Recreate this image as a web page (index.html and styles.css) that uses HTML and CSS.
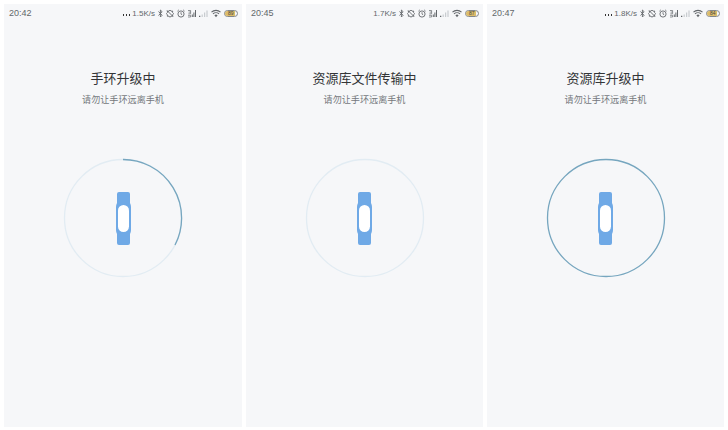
FILE: index.html
```html
<!DOCTYPE html>
<html lang="zh-CN">
<head>
    <meta charset="UTF-8">
    <title>手环升级</title>
    <link rel="stylesheet" href="styles.css">
</head>
<body>
    <svg class="defs" width="0" height="0">
        <symbol id="i-bt" viewBox="0 0 5 9"><path d="M.5 2.500l3.600 3.800L2.400 8V1l1.700 1.700L.5 6.500" fill="none" stroke="currentColor" stroke-width=".9"/></symbol>
        <symbol id="i-dnd" viewBox="0 0 8 9"><path d="M4 1l1 1.200 1.600-.2v1.600L7.700 4.700 6.600 5.800v1.500L5 7.100 4 8.300 3 7.100l-1.600.2V5.800L.3 4.700 1.400 3.600V2L3 2.200zM1 1.500l6 6" fill="none" stroke="currentColor" stroke-width=".9"/></symbol>
        <symbol id="i-alarm" viewBox="0 0 8 9"><circle cx="4" cy="5" r="3.100" fill="none" stroke="currentColor" stroke-width=".9"/><path d="M4 3.200v1.900l1.200.7M.4 2.200L1.900.8M7.600 2.200L6.100.8" fill="none" stroke="currentColor" stroke-width=".8"/></symbol>
        <symbol id="i-sig" viewBox="0 0 8 9"><path d="M0 1.500h2.600v1.600H.6M2.600 3.100v1.700H.4M0 6.300h2.600V8H0" fill="none" stroke="currentColor" stroke-width=".7"/><path d="M3.800 5.500h1V8h-1zM5.400 3.500h1V8h-1zM7 1h1v7H7z" fill="currentColor"/></symbol>
        <symbol id="i-sig2" viewBox="0 0 9 9"><path d="M0 6.800h1.300V8H0z" fill="currentColor"/><path d="M2.600 5.500h1.200V8H2.600zM5 3.500h1.200V8H5zM7.400 1.500h1.200V8H7.400z" fill="#c8ccd0"/></symbol>
        <symbol id="i-wifi" viewBox="0 0 10 9"><path d="M.5 3.200a6.500 6.500 0 0 1 9 0M2 4.900a4.300 4.300 0 0 1 6 0" fill="none" stroke="currentColor" stroke-width="1.100"/><path d="M3.400 6.300a2.300 2.300 0 0 1 3.200 0L5 8.200z" fill="currentColor"/></symbol>
        <symbol id="i-band" viewBox="0 0 15 53"><path d="M3 0h9Q14 0 14 2V11Q15 13 15 15V38Q15 40 14 42V51Q14 53 12 53H3Q1 53 1 51V42Q0 40 0 38V15Q0 13 1 11V2Q1 0 3 0z" fill="#6fa9e6"/><rect x="2" y="13" width="11" height="27" rx="5.500" fill="#fff"/></symbol>
    </svg>

    <div class="screens">
        <section class="screen">
            <div class="status-bar">
                <span class="time">20:42</span>
                <span class="status-icons">
                    <span class="dots"></span><span class="speed">1.5K/s</span>
                    <svg class="ic-bt"><use href="#i-bt"/></svg>
                    <svg class="ic"><use href="#i-dnd"/></svg>
                    <svg class="ic"><use href="#i-alarm"/></svg>
                    <svg class="ic"><use href="#i-sig"/></svg>
                    <svg class="ic-sig"><use href="#i-sig2"/></svg>
                    <svg class="ic-wifi"><use href="#i-wifi"/></svg>
                    <span class="battery"><span class="battery-level"></span><span class="battery-num">89</span></span>
                </span>
            </div>
            <h2>手环升级中</h2>
            <p class="hint">请勿让手环远离手机</p>
            <div class="ring-wrap">
                <svg class="ring" viewBox="0 0 120 120">
                    <circle class="ring-bg" cx="60" cy="60" r="58.500"/>
                    <path class="ring-fg" d="M60 1.500A58.500 58.500 0 0 1 112 87"/>
                </svg>
                <svg class="band"><use href="#i-band"/></svg>
            </div>
        </section>

        <section class="screen">
            <div class="status-bar">
                <span class="time">20:45</span>
                <span class="status-icons">
                    <span class="speed">1.7K/s</span>
                    <svg class="ic-bt"><use href="#i-bt"/></svg>
                    <svg class="ic"><use href="#i-dnd"/></svg>
                    <svg class="ic"><use href="#i-alarm"/></svg>
                    <svg class="ic"><use href="#i-sig"/></svg>
                    <svg class="ic-sig"><use href="#i-sig2"/></svg>
                    <svg class="ic-wifi"><use href="#i-wifi"/></svg>
                    <span class="battery"><span class="battery-level"></span><span class="battery-num">87</span></span>
                </span>
            </div>
            <h2>资源库文件传输中</h2>
            <p class="hint">请勿让手环远离手机</p>
            <div class="ring-wrap">
                <svg class="ring" viewBox="0 0 120 120">
                    <circle class="ring-bg" cx="60" cy="60" r="58.500"/>
                </svg>
                <svg class="band"><use href="#i-band"/></svg>
            </div>
        </section>

        <section class="screen">
            <div class="status-bar">
                <span class="time">20:47</span>
                <span class="status-icons">
                    <span class="dots"></span><span class="speed">1.8K/s</span>
                    <svg class="ic-bt"><use href="#i-bt"/></svg>
                    <svg class="ic"><use href="#i-dnd"/></svg>
                    <svg class="ic"><use href="#i-alarm"/></svg>
                    <svg class="ic"><use href="#i-sig"/></svg>
                    <svg class="ic-sig"><use href="#i-sig2"/></svg>
                    <svg class="ic-wifi"><use href="#i-wifi"/></svg>
                    <span class="battery"><span class="battery-level"></span><span class="battery-num">84</span></span>
                </span>
            </div>
            <h2>资源库升级中</h2>
            <p class="hint">请勿让手环远离手机</p>
            <div class="ring-wrap">
                <svg class="ring" viewBox="0 0 120 120">
                    <circle class="ring-fg" cx="60" cy="60" r="58.500"/>
                </svg>
                <svg class="band"><use href="#i-band"/></svg>
            </div>
        </section>
    </div>
</body>
</html>
```
FILE: styles.css
```css
* {
    margin: 0;
    padding: 0;
    box-sizing: border-box;
}

body {
    width: 728px;
    height: 430px;
    background: #fff;
    overflow: hidden;
    font-family: "Noto Sans CJK SC", "Liberation Sans", sans-serif;
}

.defs {
    display: block;
    height: 0;
}

.screens {
    display: grid;
    grid-template-columns: 238px 237px 237px;
    gap: 4px;
    padding: 4px 0 3px 4px;
    height: 430px;
}

.screen {
    background: #f6f7f9;
    display: flex;
    flex-direction: column;
    align-items: center;
}

.status-bar {
    width: 100%;
    height: 18px;
    padding: 0 4px 0 5px;
    display: flex;
    align-items: center;
    justify-content: space-between;
    font-family: "Liberation Sans", sans-serif;
    color: #63676b;
}

.time {
    font-size: 9px;
}

.status-icons {
    display: flex;
    align-items: center;
    gap: 3px;
    color: #63676b;
}

.dots {
    width: 9px;
    height: 2px;
    margin: 3px -2px 0 0;
    background: radial-gradient(circle, #333 1px, transparent 1.100px) 0 0 / 3px 2px;
}

.speed {
    font-size: 8px;
}

.ic-bt {
    width: 5px;
    height: 9px;
}

.ic {
    width: 8px;
    height: 9px;
}

.ic-sig {
    width: 9px;
    height: 9px;
}

.ic-wifi {
    width: 10px;
    height: 9px;
}

.battery {
    position: relative;
    width: 14px;
    height: 7px;
    border: 1px solid #85888a;
    border-radius: 3.500px;
    overflow: hidden;
}

.battery-level {
    display: block;
    height: 100%;
    width: 85%;
    background: #dcbc6a;
}

.battery-num {
    position: absolute;
    top: -1px;
    left: 3px;
    font-size: 5px;
    line-height: 7px;
    color: #444;
}

h2 {
    margin-top: 47px;
    font-size: 13px;
    line-height: 18px;
    font-weight: 400;
    color: #333537;
}

.hint {
    margin-top: 5px;
    font-size: 9.100px;
    line-height: 14px;
    color: #74787c;
}

.ring-wrap {
    position: relative;
    margin-top: 52px;
    width: 120px;
    height: 120px;
    display: flex;
    align-items: center;
    justify-content: center;
}

.ring {
    position: absolute;
    inset: 0;
    width: 120px;
    height: 120px;
}

.ring-bg,
.ring-fg {
    fill: none;
    stroke-width: 1.300;
}

.ring-bg {
    stroke: #e2ecf3;
}

.ring-fg {
    stroke: #76a6bf;
}

.band {
    width: 15px;
    height: 53px;
}
```
